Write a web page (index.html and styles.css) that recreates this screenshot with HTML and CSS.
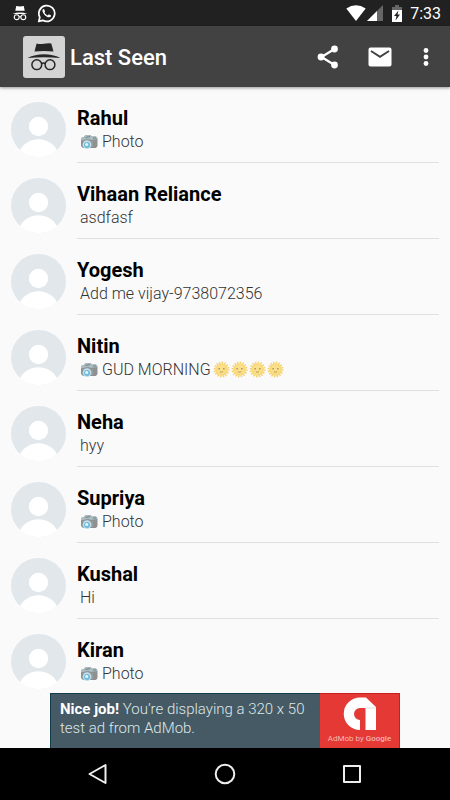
FILE: index.html
```html
<!DOCTYPE html>
<html lang="en">
<head>
<meta charset="utf-8">
<meta name="viewport" content="width=device-width, initial-scale=1">
<title>Last Seen</title>
<link rel="stylesheet" href="styles.css">
</head>
<body>
<svg class="sprite" aria-hidden="true">
  <symbol id="person" viewBox="0 0 55 55">
    <circle cx="27.500" cy="27.500" r="27.500" fill="#e1e7ea"/>
    <circle cx="27.500" cy="24.500" r="9.700" fill="#fff"/>
    <path d="M9 48C13 41 20 37.300 27.500 37.300S42 41 46 48C41 52.500 35 55 27.500 55S14 52.500 9 48Z" fill="#fff"/>
  </symbol>
  <symbol id="camera" viewBox="0 0 18 16">
    <path d="M1 4 4 3 5 1.500 10 1 12 2.500 16 2.500 17.500 4.500V12L16 14 3 14 1 12Z" fill="#8d9192"/>
    <path d="M1 4 4 3 5 1.500 10 1 12 2.500 16 2.500 17.300 5 11 6 8 5 1 6.500Z" fill="#a9bcc0"/>
    <path d="M5.500 3.500 10 2.500M13 4H16" stroke="#6f8589" stroke-width="1"/>
    <path d="M12 7V13" stroke="#a3a3a3" stroke-width="1"/>
    <circle cx="7" cy="10.700" r="4.400" fill="#c4dfe9"/>
    <circle cx="7" cy="10.900" r="3" fill="#6bbcdd"/>
    <circle cx="6.700" cy="10.500" r="1.600" fill="#e2f6fc"/>
  </symbol>
  <symbol id="sun" viewBox="0 0 18 18">
    <circle cx="9" cy="9" r="7.400" fill="none" stroke="#f5cf68" stroke-width="2" stroke-dasharray="1.500 1.406"/>
    <circle cx="9" cy="9" r="6.700" fill="#f8d878"/>
    <circle cx="9" cy="9" r="5" fill="#fadf8c"/>
    <path d="M6.500 7.300V9M11.500 7.300V9" stroke="#97885b" stroke-width="1.300"/>
    <path d="M7.300 11.300Q9 12.500 10.700 11.300" fill="none" stroke="#b99549" stroke-width="1"/>
  </symbol>
</svg>

<div class="status">
  <svg class="status-spy" viewBox="0 0 34 32" aria-hidden="true">
    <path d="M9 1Q17 3 25 1L27 11H7ZM1 18Q17 12 33 18Z"/>
    <g fill="none" stroke="#fff" stroke-width="2.400"><circle cx="10" cy="25" r="5.200"/><circle cx="24" cy="25" r="5.200"/><path d="M15 24H19"/></g>
  </svg>
  <svg class="status-chat" viewBox="0 0 24 24" aria-hidden="true">
    <path d="M2.200 22 3.600 16.800A10 10 0 1 1 7.300 20.600Z" fill="none" stroke="#fff" stroke-width="2.200" stroke-linejoin="round"/>
    <path d="M8.900 6.600C8.500 6.200 7.800 6.500 7.300 7.100 6.300 8.400 7 10.700 9.100 13.200S13.600 17 15.500 16.800C16.900 16.600 17.900 15.600 17.700 14.500L15 13 13.700 14.500C11.800 13.800 10.300 12.300 9.500 10.600L10.200 9.300Z" fill="#fff"/>
  </svg>
  <span class="grow"></span>
  <svg class="status-wifi" viewBox="0 0 20 16" aria-hidden="true"><path d="M.3 3.500Q10-3 19.700 3.500L10 16Z" fill="#fff"/></svg>
  <svg class="status-cell" viewBox="0 0 16 16" aria-hidden="true"><path d="M0 16 16 0V16Z" fill="#666"/><path d="M0 16 10 6V16Z" fill="#fff"/></svg>
  <svg class="status-battery" viewBox="0 0 10 17" aria-hidden="true"><path d="M0 2H3V0H7V2H10V6H0Z" fill="#666"/><path d="M0 5H10V17H0Z" fill="#fff"/><path d="M6.500 5.500 2 11H4.500L3.500 15.500 8 9.500H5.500Z" fill="#222"/></svg>
  <span class="clock">7:33</span>
</div>

<header class="toolbar">
  <span class="logo"><svg viewBox="0 0 34 28" aria-hidden="true">
    <path d="M9.600.5Q13 1.500 17 .8 21 0 24.300.5L26.500 8.500Q17 7.500 7.500 8.500Z"/>
    <path d="M.5 15Q8 11.300 17 11.300T33.500 15Q17 13.700.5 15Z"/>
    <g fill="none" stroke="#262626" stroke-width="1.500"><circle cx="9.800" cy="21.700" r="4.900"/><circle cx="23" cy="21.700" r="4.900"/><path d="M14.600 20.600Q16.400 19.300 18.200 20.600"/></g>
  </svg></span>
  <h1>Last Seen</h1>
  <button class="share" type="button" aria-label="Share"><svg viewBox="0 0 22 24" aria-hidden="true"><path d="M17.500 4 4.500 12 17.500 20" fill="none" stroke="#fff" stroke-width="2.300"/><circle cx="17.500" cy="4" r="3.400" fill="#fff"/><circle cx="4" cy="12" r="3.400" fill="#fff"/><circle cx="17.500" cy="20" r="3.400" fill="#fff"/></svg></button>
  <button class="mail" type="button" aria-label="Email"><svg viewBox="0 0 24 20" aria-hidden="true"><rect x=".5" y=".5" width="23" height="19" rx="2" fill="#fff"/><path d="M3 4 12 9.800 21 4" fill="none" stroke="#424242" stroke-width="2"/></svg></button>
  <button class="more" type="button" aria-label="More options"><svg viewBox="0 0 6 20" aria-hidden="true"><g fill="#fff"><circle cx="3" cy="3.500" r="2.400"/><circle cx="3" cy="10" r="2.400"/><circle cx="3" cy="16.500" r="2.400"/></g></svg></button>
</header>

<main>
  <ul class="chats">
    <li><svg class="avatar" aria-hidden="true"><use href="#person"/></svg><div class="info"><h2>Rahul</h2><p><svg class="camera" aria-hidden="true"><use href="#camera"/></svg>Photo</p></div></li>
    <li><svg class="avatar" aria-hidden="true"><use href="#person"/></svg><div class="info"><h2>Vihaan Reliance</h2><p>asdfasf</p></div></li>
    <li><svg class="avatar" aria-hidden="true"><use href="#person"/></svg><div class="info"><h2>Yogesh</h2><p>Add me vijay-9738072356</p></div></li>
    <li><svg class="avatar" aria-hidden="true"><use href="#person"/></svg><div class="info"><h2>Nitin</h2><p><svg class="camera" aria-hidden="true"><use href="#camera"/></svg>GUD MORNING<span class="suns"><svg aria-hidden="true"><use href="#sun"/></svg><svg aria-hidden="true"><use href="#sun"/></svg><svg aria-hidden="true"><use href="#sun"/></svg><svg aria-hidden="true"><use href="#sun"/></svg></span></p></div></li>
    <li><svg class="avatar" aria-hidden="true"><use href="#person"/></svg><div class="info"><h2>Neha</h2><p>hyy</p></div></li>
    <li><svg class="avatar" aria-hidden="true"><use href="#person"/></svg><div class="info"><h2>Supriya</h2><p><svg class="camera" aria-hidden="true"><use href="#camera"/></svg>Photo</p></div></li>
    <li><svg class="avatar" aria-hidden="true"><use href="#person"/></svg><div class="info"><h2>Kushal</h2><p>Hi</p></div></li>
    <li><svg class="avatar" aria-hidden="true"><use href="#person"/></svg><div class="info"><h2>Kiran</h2><p><svg class="camera" aria-hidden="true"><use href="#camera"/></svg>Photo</p></div></li>
  </ul>
</main>

<aside class="ad">
  <p class="ad-text"><b>Nice job!</b> You’re displaying a 320 x 50<br>test ad from AdMob.</p>
  <div class="ad-brand">
    <svg viewBox="0 0 34 34" aria-hidden="true">
      <path d="M17 .5H23L33 10V33H22.500V11H17A6 6 0 0 0 17 23V33A16.250 16.250 0 0 1 17 .5Z" fill="#fff"/>
      <path d="M22.500 11H33" stroke="#ddd" stroke-width="1"/>
    </svg>
    <span>AdMob by <b>Google</b></span>
  </div>
</aside>

<nav class="system">
  <button type="button" aria-label="Back"><svg viewBox="0 0 22 22" aria-hidden="true"><path d="M18.500 2V20L2.500 11Z"/></svg></button>
  <button type="button" aria-label="Home"><svg viewBox="0 0 22 22" aria-hidden="true"><circle cx="11" cy="11" r="9.300"/></svg></button>
  <button type="button" aria-label="Recent apps"><svg viewBox="0 0 22 22" aria-hidden="true"><rect x="3" y="3" width="16" height="16"/></svg></button>
</nav>
</body>
</html>
```
FILE: styles.css
```css
* { box-sizing: border-box; }

body {
  margin: 0;
  height: 100vh;
  display: flex;
  flex-direction: column;
  background: #fafafa;
  color: #000;
  font-family: Roboto, "Liberation Sans", sans-serif;
}

h1, h2, p, ul { margin: 0; padding: 0; }
svg { display: block; flex: none; }
button { display: block; padding: 0; border: 0; background: none; }

.sprite { position: absolute; width: 0; height: 0; }
.grow { flex: 1; }

.status {
  flex: none;
  display: flex;
  align-items: center;
  height: 26px;
  padding: 0 9px 0 12px;
  background: #212121;
  color: #fff;
  fill: #fff;
}
.status-spy { width: 16px; height: 16px; }
.status-chat { width: 19px; height: 19px; margin-left: 9px; }
.status-wifi { width: 20px; height: 16px; }
.status-cell { width: 16px; height: 16px; margin-left: 1px; }
.status-battery { width: 10px; height: 17px; margin: 0 8px 0 9px; }
.clock { padding-top: 2px; font-size: 16px; line-height: 24px; font-weight: 400; }

.toolbar {
  flex: none;
  display: flex;
  align-items: center;
  height: 61px;
  padding: 0 21px 0 23px;
  background: #424242;
  box-shadow: 0 1px 3px rgba(0, 0, 0, .4);
  z-index: 1;
}
.logo {
  display: grid;
  place-items: center;
  width: 42px;
  height: 42px;
  border-radius: 3px;
  background: #d3d3d3;
  fill: #262626;
}
.logo svg { width: 34px; height: 28px; }
.toolbar h1 {
  flex: 1;
  margin-left: 5px;
  padding-top: 3px;
  color: #fff;
  font-size: 22px;
  font-weight: 500;
  line-height: 28px;
}
.share svg { width: 22px; height: 24px; }
.mail { margin: 0 31px 0 29px; }
.mail svg { width: 24px; height: 20px; }
.more svg { width: 6px; height: 20px; }

main { flex: 1; min-height: 0; overflow: hidden; }
.chats { list-style: none; }
.chats li {
  display: flex;
  align-items: flex-start;
  gap: 11px;
  height: 76px;
  padding: 0 11px;
}
.avatar { width: 55px; height: 55px; margin-top: 15px; }
.info {
  flex: 1;
  height: 76px;
  padding-top: 19px;
  border-bottom: 1px solid #e0e0e0;
}
.info h2 { font-size: 20px; font-weight: 700; line-height: 24px; }
.info p {
  display: flex;
  align-items: center;
  padding-left: 3px;
  color: #333;
  font-size: 16px;
  font-weight: 300;
  line-height: 23px;
}
.camera { width: 18px; height: 16px; margin-right: 4px; }
.suns { display: flex; gap: 1px; margin-left: 2px; }
.suns svg { width: 17px; height: 17px; }

.ad {
  flex: none;
  align-self: center;
  display: flex;
  width: 350px;
  max-width: 100%;
  height: 55px;
  background: #455a64;
}
.ad-text {
  flex: 1;
  min-width: 0;
  padding: 6px 0 0 9px;
  border: solid #123e4b;
  border-width: 1px 0 0 1px;
  color: #dfe7e9;
  font-size: 15px;
  font-weight: 300;
  line-height: 19px;
  white-space: nowrap;
}
.ad-text b { color: #fff; font-weight: 700; }
.ad-brand {
  flex: none;
  display: flex;
  flex-direction: column;
  align-items: center;
  width: 80px;
  padding-top: 3px;
  border: solid #c91d20;
  border-width: 1px 1px 0 0;
  background: #e53935;
  color: #f7b5b3;
  font-size: 8px;
  line-height: 12px;
}
.ad-brand svg { width: 34px; height: 34px; }
.ad-brand span { margin-top: 2px; }
.ad-brand b { font-weight: 500; }

.system {
  flex: none;
  display: flex;
  align-items: center;
  justify-content: center;
  gap: 105px;
  height: 52px;
  background: #000;
}
.system svg {
  width: 22px;
  height: 22px;
  fill: none;
  stroke: #eee;
  stroke-width: 2;
  stroke-linejoin: round;
}
```
